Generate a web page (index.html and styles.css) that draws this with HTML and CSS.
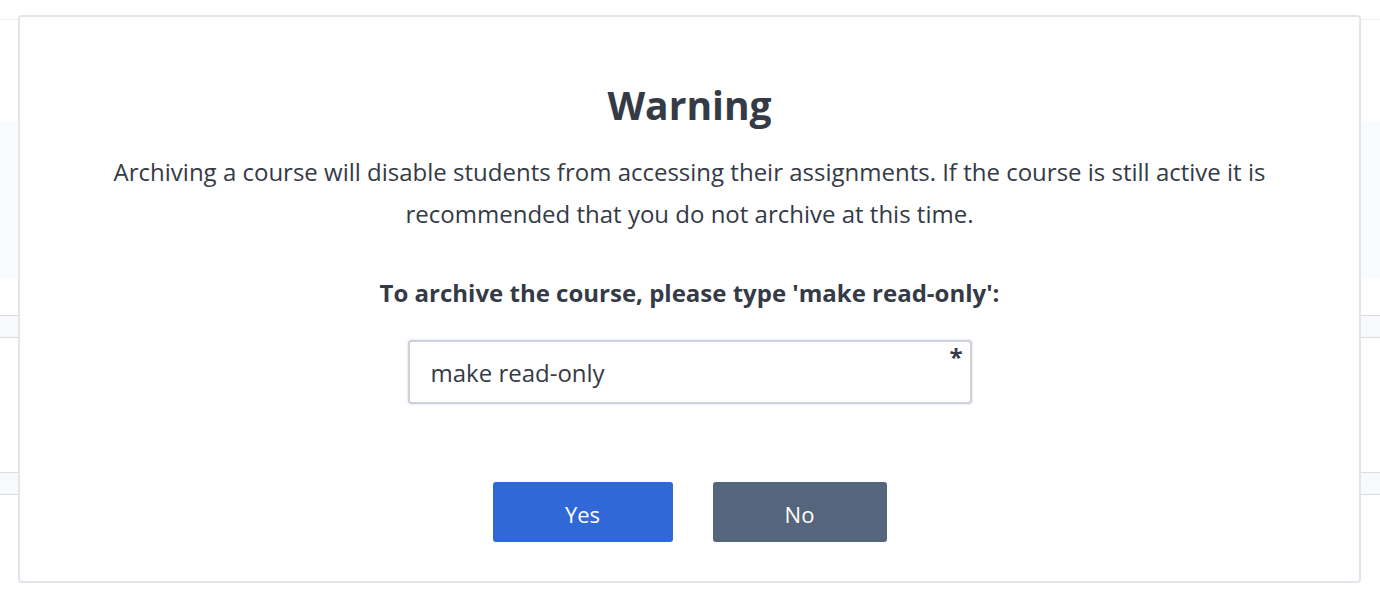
FILE: index.html
```html
<!DOCTYPE html>
<html lang="en">
<head>
  <meta charset="UTF-8" />
  <title>Archive course</title>
  <meta name="viewport" content="width=device-width, initial-scale=1.0" />
  <link rel="stylesheet" href="styles.css">
</head>
<body>
  <!-- page behind the dialog -->
  <div class="page">
    <div class="page-top"></div>
    <div class="page-band"></div>
    <div class="page-gap"></div>
    <div class="page-row"></div>
    <div class="page-body"></div>
    <div class="page-row"></div>
  </div>

  <div class="overlay">
    <div class="modal">
      <h1 class="modal-title">Warning</h1>
      <p class="modal-text">Archiving a course will disable students from accessing their assignments. If the course is still active it is recommended that you do not archive at this time.</p>
      <label class="modal-label" for="confirm">To archive the course, please type 'make read-only':</label>
      <div class="field">
        <input id="confirm" class="field-input" type="text" value="make read-only" />
        <span class="field-required">*</span>
      </div>
      <div class="actions">
        <button class="btn btn-yes">Yes</button>
        <button class="btn btn-no">No</button>
      </div>
    </div>
  </div>
</body>
</html>
```

FILE: styles.css
```css
body {
  margin: 0;
  font-family: 'Open Sans', 'Noto Sans', sans-serif;
  background: #fff;
  color: #343a46;
}
.page {
  display: flex;
  flex-direction: column;
  padding-top: 19px;
}
.page-top {
  height: 101px;
  border-top: 1px solid #eceef2;
}
.page-band {
  height: 158px;
  background: #fafbfc;
}
.page-gap {
  height: 36px;
}
.page-row {
  height: 21px;
  background: #f8f9fa;
  border-top: 1px solid #d9dce1;
  border-bottom: 1px solid #d9dce1;
}
.page-body {
  height: 134px;
}
.overlay {
  position: absolute;
  top: 15px;
  left: 18px;
  width: 1343px;
}
.modal {
  box-sizing: border-box;
  background: #fff;
  border: 2px solid #e3e5ea;
  border-radius: 4px;
  padding: 65px 70px 39px;
  display: flex;
  flex-direction: column;
  align-items: center;
  text-align: center;
}
.modal-title {
  margin: 0;
  font-size: 39px;
  line-height: 46px;
  font-weight: 700;
  color: #343a46;
}
.modal-text {
  margin: 23px 0 0;
  font-size: 24px;
  line-height: 42px;
}
.modal-label {
  margin-top: 44px;
  font-size: 24px;
  line-height: 28px;
  font-weight: 700;
}
.field {
  margin-top: 33px;
  position: relative;
  width: 564px;
}
.field-input {
  box-sizing: border-box;
  width: 100%;
  height: 64px;
  padding: 0 21px;
  border: 2px solid #cdd1da;
  border-radius: 4px;
  box-shadow: 0 0 2px rgba(90, 100, 120, 0.35);
  font-family: inherit;
  font-size: 24px;
  color: #343a46;
  outline: none;
}
.field-required {
  position: absolute;
  top: 3px;
  right: 9px;
  font-size: 24px;
  font-weight: 700;
  line-height: 28px;
}
.actions {
  margin-top: 78px;
  display: flex;
  gap: 40px;
}
.btn {
  height: 60px;
  padding: 4px 0 0;
  border: none;
  border-radius: 3px;
  color: #fff;
  font-family: inherit;
  font-size: 22px;
  font-weight: 500;
  cursor: pointer;
}
.btn-yes {
  width: 180px;
  background: #3068d8;
}
.btn-no {
  width: 174px;
  background: #55657b;
}
```
